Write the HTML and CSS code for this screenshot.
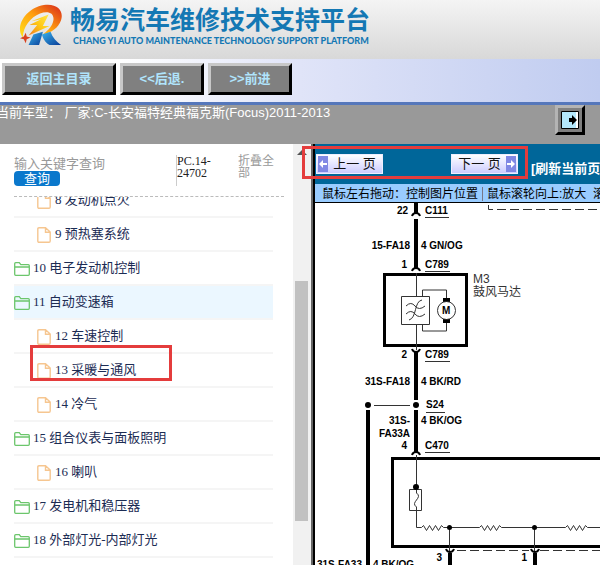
FILE: index.html
```html
<!DOCTYPE html>
<html lang="zh-CN">
  <head>
    <meta charset="UTF-8" />
    <meta name="viewport" content="width=device-width, initial-scale=1.0" />
    <title>畅易汽车维修技术支持平台</title>
    <link rel="stylesheet" href="styles.css">
  </head>
  <body>
    <header class="banner">
      <svg class="logo" viewBox="0 0 48 44" aria-hidden="true">
        <defs>
          <linearGradient id="flame" x1="0" y1="1" x2="1" y2="0">
            <stop offset="0" stop-color="#ffe21a" />
            <stop offset="0.5" stop-color="#ffa010" />
            <stop offset="1" stop-color="#d8261a" />
          </linearGradient>
          <linearGradient id="bolt" x1="0" y1="1" x2="1" y2="0">
            <stop offset="0" stop-color="#f0781e" />
            <stop offset="0.5" stop-color="#ffc814" />
            <stop offset="1" stop-color="#ffe84a" />
          </linearGradient>
          <linearGradient id="leg" x1="0" y1="0" x2="1" y2="1">
            <stop offset="0" stop-color="#38b4ee" />
            <stop offset="1" stop-color="#0a3c96" />
          </linearGradient>
        </defs>
        <path fill="url(#flame)" d="M5 35C-4 24 8 4 27 1c15-2 21 7 18 16-3 8-10 13-19 15 6-5 10-9 11-15 1-8-6-10-14-7C13 14 5 24 5 35z" />
        <path fill="url(#bolt)" d="M14 18l18-7-6 12h7L11 33l9-11h-8l12-6z" />
        <path fill="#d8401e" d="M8 30l1 4 4 1-4 2-1 4-2-4-4-1 4-2z" />
        <path fill="url(#leg)" d="M16 32l10-3-4 14H11z" />
        <path fill="url(#leg)" d="M25 32l9-3c2 6 6 10 11 14H33c-5-3-7-7-8-11z" />
      </svg>
      <div class="brand">
        <h1>畅易汽车维修技术支持平台</h1>
        <p>CHANG YI AUTO MAINTENANCE TECHNOLOGY SUPPORT PLATFORM</p>
      </div>
    </header>

    <nav class="toolbar">
      <button class="nav-button nav-home" type="button">返回主目录</button>
      <button class="nav-button" type="button">&lt;&lt;后退.</button>
      <button class="nav-button" type="button">&gt;&gt;前进</button>
    </nav>

    <div class="model-bar">
      <span class="model-name">当前车型： 厂家:C-长安福特经典福克斯(Focus)2011-2013</span>
      <button class="toggle-button" type="button" aria-label="展开">
        <svg viewBox="0 0 18 18">
          <path fill="#b4e8fc" stroke="#000" d="M.5.5h17v17H.5z" />
          <path fill="#fff" d="M15 1h2v16h-2z" />
          <path d="M8 7h3V4l5 5-5 5v-3H8z" />
        </svg>
      </button>
    </div>

    <main class="content">
      <aside class="sidebar">
        <div class="search">
          <div class="search-form">
            <input class="search-input" type="text" placeholder="输入关键字查询" aria-label="输入关键字查询" />
            <button class="search-button" type="button">查询</button>
          </div>
          <div class="doc-code">PC.14-<br />24702</div>
          <a class="collapse-all" href="#">折叠全部</a>
        </div>

        <svg class="symbols" aria-hidden="true">
          <symbol id="file" viewBox="0 0 14 16">
            <path fill="none" stroke="#f6c690" stroke-width="1.4" d="M2 .8h6.500L13.200 5v9q0 1.200-1.200 1.200H2Q.8 15.200.8 14V2Q.8.800 2 .8zM8.500 1v4.200H13" />
          </symbol>
          <symbol id="folder" viewBox="0 0 16 14">
            <path fill="none" stroke="#6cc66c" stroke-width="1.300" d="M.7 12.300V1.700q0-1 1-1h3.600l1.500 2h7.500q1 0 1 1v8.600q0 1-1 1H1.700q-1 0-1-1zM.7 5h14.600" />
          </symbol>
        </svg>

        <div class="tree-box">
          <ul class="tree">
            <li class="child"><a href="#"><svg class="file"><use href="#file" /></svg>8 发动机点火</a></li>
            <li class="child"><a href="#"><svg class="file"><use href="#file" /></svg>9 预热塞系统</a></li>
            <li><a href="#"><svg class="folder"><use href="#folder" /></svg>10 电子发动机控制</a></li>
            <li class="active"><a href="#"><svg class="folder"><use href="#folder" /></svg>11 自动变速箱</a></li>
            <li class="child"><a href="#"><svg class="file"><use href="#file" /></svg>12 车速控制</a></li>
            <li class="child"><a href="#"><svg class="file"><use href="#file" /></svg>13 采暖与通风</a><span class="mark mark-item"></span></li>
            <li class="child"><a href="#"><svg class="file"><use href="#file" /></svg>14 冷气</a></li>
            <li><a href="#"><svg class="folder"><use href="#folder" /></svg>15 组合仪表与面板照明</a></li>
            <li class="child"><a href="#"><svg class="file"><use href="#file" /></svg>16 喇叭</a></li>
            <li><a href="#"><svg class="folder"><use href="#folder" /></svg>17 发电机和稳压器</a></li>
            <li><a href="#"><svg class="folder"><use href="#folder" /></svg>18 外部灯光-内部灯光</a></li>
          </ul>
        </div>
      </aside>

      <div class="scrollbar">
        <span class="scroll-arrow"></span>
        <span class="scroll-thumb"></span>
      </div>

      <section class="viewer">
        <div class="pager">
          <button class="page-button" type="button">
            <svg viewBox="0 0 10 16"><path fill="#8088e4" d="M0 0h10v16H0z" /><path fill="#fff" d="M1 8l4-4v3h4v2H5v3z" /></svg>
            <span>上一 页</span>
          </button>
          <button class="page-button page-next" type="button">
            <span>下一 页</span>
            <svg viewBox="0 0 10 16"><path fill="#8088e4" d="M0 0h10v16H0z" /><path fill="#fff" d="M9 8L5 4v3H1v2h4v3z" /></svg>
          </button>
          <a class="refresh" href="#">[刷新当前页]</a>
          <span class="mark mark-pager"></span>
        </div>
        <div class="tips">鼠标左右拖动：控制图片位置<i></i>鼠标滚轮向上:放大&nbsp; 滚轮向下:缩小</div>

        <div class="diagram">
          <svg width="640" height="400" viewBox="0 0 640 400">
            <!-- thick wires -->
            <path class="wire" d="M101 0v11M101 16v50M101 149v48M101 207v43M53 207v193M135 350v50M220 350v50" />
            <!-- connectors -->
            <path class="plug" d="M97 13q1-3 4-3t4 3M97 68q1-3 4-3t4 3M97 146q1 3 4 3t4-3M97 252q1-3 4-3t4 3M131 346q1 3 4 3t4-3M216 346q1 3 4 3t4-3" />
            <!-- units -->
            <path class="unit" d="M69.500 71.500h82v71h-82zM640 255.500H77.500v88H640" />
            <path class="thin" d="M101.500 70v23M86.500 93.500h28v28h-28zM107.500 93v-6h24v9M131.500 118v10h-24v-6M101.500 122v25M59 202.500h36M101.500 252v34M94.500 286.500h12v21h-12z" />
            <path class="curve" d="M91 103q5-5 9 0t10 0M91 111q5-5 9 0t10 0M94 117c8-2 5-19 13-20" />
            <path d="M128 95h7v4h-7zM128 116h7v4h-7z" />
            <circle class="motor" cx="131.500" cy="107.500" r="9" />
            <!-- fuse and resistors -->
            <path class="curve" d="M101.500 287v3c7 5-7 9 0 14v3" />
            <path class="thin" d="M101.500 307v17.500h5l2-2 3 5 3-5 3 5 3-5 3 5 3-5 2 2h36l2-2 3 5 3-5 3 5 3-5 3 5 3-5 2 2h64l2-2 3 5 3-5 3 5 3-5 3 5 3-5 2 2h365M134.500 324v24M219.500 324v24" />
            <path class="dash" d="M173.500 2v4.500H640M142 347.500h72M225 347.500h415" />
            <circle cx="53" cy="202" r="3" />
            <circle cx="101" cy="202" r="3" />
            <circle cx="101" cy="284" r="3" />
            <circle cx="134.500" cy="324.500" r="2.500" />
            <circle cx="219.500" cy="324.500" r="2.500" />
            <!-- connector underlines -->
            <path class="thin" d="M110 14.500h24M110 68.500h25M110 158.500h25M111 209.500h19M110 249.500h25" />

            <g class="label left">
              <text x="93" y="11">22</text>
              <text x="95" y="46">15-FA18</text>
              <text x="92" y="65">1</text>
              <text x="92" y="155">2</text>
              <text x="95" y="182">31S-FA18</text>
              <text x="95" y="221">31S-</text>
              <text x="95" y="234">FA33A</text>
              <text x="92" y="246">4</text>
              <text x="127" y="358">3</text>
              <text x="212" y="358">1</text>
              <text x="47" y="365">31S-FA33</text>
            </g>
            <g class="label">
              <text x="110" y="11">C111</text>
              <text x="106" y="46">4 GN/OG</text>
              <text x="110" y="65">C789</text>
              <text x="110" y="155">C789</text>
              <text x="106" y="182">4 BK/RD</text>
              <text x="111" y="205">S24</text>
              <text x="106" y="221">4 BK/OG</text>
              <text x="110" y="246">C470</text>
              <text x="58" y="365">4 BK/OG</text>
              <text x="127" y="111">M</text>
            </g>
            <g class="part">
              <text x="158" y="80">M3</text>
              <text x="158" y="93">鼓风马达</text>
            </g>
          </svg>
        </div>
      </section>
    </main>
  </body>
</html>
```
FILE: styles.css
```css
* {
  box-sizing: border-box;
}

body {
  display: flex;
  flex-direction: column;
  height: 100vh;
  margin: 0;
  overflow: hidden;
  font-family: "Liberation Sans", "Noto Sans CJK SC", sans-serif;
  font-size: 13px;
  background-color: #fff;
}

button {
  font-family: inherit;
  cursor: pointer;
}

a {
  text-decoration: none;
}

.banner {
  display: flex;
  flex-shrink: 0;
  height: 59px;
  padding: 4px 0 0 18px;
  background: linear-gradient(#f4f4f4, #d8d8d8);
}

.logo {
  width: 46px;
  height: 42px;
}

.brand {
  padding-left: 6px;
  color: #1478b4;
}

.brand h1 {
  margin: 0;
  font-size: 25px;
  line-height: 32px;
  white-space: nowrap;
}

.brand p {
  margin: 0 0 0 3px;
  font-family: Lato, sans-serif;
  font-size: 9px;
  font-weight: 900;
  line-height: 10px;
  white-space: nowrap;
}

.toolbar {
  display: flex;
  flex-shrink: 0;
  gap: 4px;
  height: 46px;
  padding: 4px 2px 6px;
  background: linear-gradient(to right, #fff, #fff 20%, #e0e4f8 50%, #c0ccf0);
  border-bottom: 3px solid #5577bb;
}

.nav-button {
  width: 84px;
  height: 32px;
  padding: 0 0 4px;
  color: #b0e4fc;
  font-size: 13px;
  font-weight: bold;
  background-color: #808080;
  border: 3px solid;
  border-color: #c8c8c8 #000 #000 #c8c8c8;
}

.nav-home {
  width: 114px;
}

.model-bar {
  display: flex;
  flex-shrink: 0;
  justify-content: space-between;
  height: 39px;
  padding-right: 15px;
  color: #fff;
  background-color: #999;
}

.model-name {
  margin-left: -4px;
  line-height: 15px;
  white-space: nowrap;
}

.toggle-button {
  width: 30px;
  height: 30px;
  padding: 3px;
  background-color: #808080;
  border: 3px solid;
  border-color: #b4b4b4 #000 #000 #b4b4b4;
}

.toggle-button svg {
  display: block;
  width: 18px;
  height: 18px;
}

.content {
  display: flex;
  flex: 1;
  min-height: 0;
}

/* left menu */
.sidebar {
  display: flex;
  flex: 0 0 293px;
  flex-direction: column;
  padding: 11px 9px 0 14px;
}

.search {
  display: flex;
  flex-shrink: 0;
  height: 42px;
  border-bottom: 1px dashed #bbb;
}

.search-form {
  width: 162px;
}

.search-input {
  display: block;
  width: 150px;
  height: 16px;
  padding: 0;
  font-family: inherit;
  font-size: 13px;
  border: none;
}

.search-input::placeholder {
  color: #999;
}

.search-button {
  display: block;
  width: 46px;
  height: 15px;
  padding: 0;
  color: #fff;
  font-size: 13px;
  line-height: 14px;
  background-color: #0a78cc;
  border: none;
  border-radius: 4px;
}

.doc-code {
  width: 62px;
  height: 31px;
  color: #222;
  font-family: "Liberation Serif", serif;
  font-size: 12px;
  line-height: 12px;
  border-left: 1px solid #ccc;
}

.collapse-all {
  width: 38px;
  color: #999;
  font-size: 12px;
  line-height: 12px;
}

.symbols {
  display: none;
}

.tree-box {
  display: flex;
  flex: 1;
  align-items: flex-start;
  min-height: 0;
  overflow: hidden;
}

.tree {
  flex: 1;
  margin: -13px 11px 0 0;
  padding: 0;
  list-style: none;
}

.tree li {
  position: relative;
  height: 34px;
  border-bottom: 2px solid #f5f5f5;
}

.tree a {
  display: flex;
  height: 34px;
  color: #1c2c54;
  font-family: "Liberation Serif", "Noto Sans CJK SC", serif;
  line-height: 32px;
  white-space: nowrap;
}

.tree .child {
  padding-left: 23px;
}

.tree .active {
  background-color: #ebf7ff;
}

.tree .folder {
  width: 16px;
  height: 14px;
  margin: 10px 3px 0 0;
}

.tree .file {
  width: 14px;
  height: 16px;
  margin: 9px 4px 0 0;
}

.mark {
  position: absolute;
  border: 3px solid #e43c3c;
  pointer-events: none;
}

.mark-item {
  top: -9px;
  left: 16px;
  width: 142px;
  height: 36px;
}

.mark-pager {
  top: 2px;
  left: -13px;
  width: 226px;
  height: 33px;
}

.scrollbar {
  display: flex;
  flex: 0 0 18px;
  flex-direction: column;
  align-items: center;
  padding-right: 1px;
  background-color: #f1f1f1;
}

.scroll-arrow {
  margin-top: 6px;
  border: 5px solid transparent;
  border-top: none;
  border-bottom-color: #555;
}

.scroll-thumb {
  width: 13px;
  height: 57%;
  margin-top: 126px;
  background-color: #c1c1c1;
}

/* circuit viewer */
.viewer {
  display: flex;
  flex: 1;
  flex-direction: column;
  min-width: 0;
  padding-left: 2px;
  background-color: #000;
  border-left: 2px solid #666;
}

.pager {
  position: relative;
  display: flex;
  flex-shrink: 0;
  align-items: center;
  height: 40px;
  padding-left: 1px;
  background-color: #006699;
}

.page-button {
  display: flex;
  flex-shrink: 0;
  width: 67px;
  height: 20px;
  padding: 1px;
  color: #111;
  font-size: 13px;
  line-height: 16px;
  background: linear-gradient(#fff, #ccccff);
  border: 1px solid #eef;
}

.page-button span {
  flex: 1;
  white-space: nowrap;
}

.page-button svg {
  width: 10px;
  height: 16px;
}

.page-next {
  margin-left: 68px;
}

.refresh {
  padding: 10px 0 0 13px;
  color: #fff;
  font-weight: bold;
  line-height: 20px;
  white-space: nowrap;
}

.tips {
  flex-shrink: 0;
  height: 19px;
  padding-left: 7px;
  overflow: hidden;
  color: #000;
  font-size: 12px;
  line-height: 20px;
  white-space: nowrap;
  background-color: #99ccff;
  border-bottom: 1px solid #000;
}

.tips i {
  margin: 0 4px;
  border-left: 1px solid #778;
}

.diagram {
  flex: 1;
  min-height: 0;
  overflow: hidden;
  background-color: #fff;
}

.diagram svg {
  display: block;
}

.wire {
  fill: none;
  stroke: #000;
  stroke-width: 4;
}

.plug {
  fill: none;
  stroke: #000;
  stroke-width: 2;
}

.unit {
  fill: none;
  stroke: #000;
  stroke-width: 3;
}

.thin,
.curve,
.motor {
  fill: none;
  stroke: #333;
}

.dash {
  fill: none;
  stroke: #333;
  stroke-dasharray: 9 4;
}

.label {
  font-size: 10px;
  font-weight: bold;
}

.left {
  text-anchor: end;
}

.part {
  font-size: 12px;
  fill: #333;
}
```
